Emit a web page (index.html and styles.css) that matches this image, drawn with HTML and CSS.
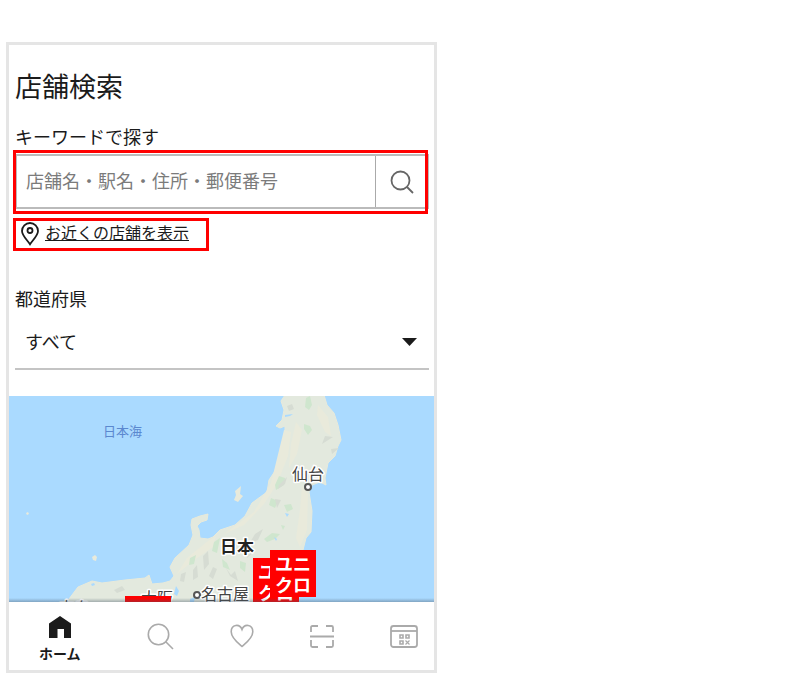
FILE: index.html
```html
<!DOCTYPE html>
<html lang="ja">
<head>
<meta charset="utf-8">
<meta name="viewport" content="width=device-width, initial-scale=1">
<title>店舗検索</title>
<link rel="stylesheet" href="styles.css">
</head>
<body>
<div class="app">
  <main class="content">
    <h1 class="title">店舗検索</h1>
    <label class="label" for="keyword">キーワードで探す</label>
    <form class="search">
      <input class="search-input" id="keyword" type="text" placeholder="店舗名・駅名・住所・郵便番号">
      <button class="search-button" type="button" aria-label="検索">
        <svg width="24" height="24" viewBox="0 0 24 24" fill="none" stroke="#666" stroke-width="1.800"><circle cx="10.500" cy="10.500" r="9"/><path d="M17 17l6 6"/></svg>
      </button>
    </form>
    <a class="nearby" href="#map">
      <svg width="18" height="24" viewBox="0 0 18 24" fill="none" stroke="#1b1b1b" stroke-width="1.800"><path d="M9 22.300C6.500 18.500 1 13.500 1 9a8 8 0 0 1 16 0c0 4.500-5.500 9.500-8 13.300z"/><circle cx="9" cy="8.500" r="2.500"/></svg>
      <span class="nearby-text">お近くの店舗を表示</span>
    </a>
    <label class="label label-area" for="area">都道府県</label>
    <div class="select-wrap">
      <select class="select" id="area"><option>すべて</option></select>
      <svg class="select-arrow" width="15" height="8" viewBox="0 0 15 8"><path d="M0 0h15L7.500 8z" fill="#1b1b1b"/></svg>
    </div>
  </main>

  <svg class="map" id="map" viewBox="9 396 425 206" preserveAspectRatio="xMidYMid slice" role="img" aria-label="日本の地図">
    <defs>
      <linearGradient id="shade" x1="0" y1="0" x2="0" y2="1"><stop offset="0" stop-color="#456" stop-opacity="0"/><stop offset="1" stop-color="#456" stop-opacity=".4"/></linearGradient>
      <g id="pin">
        <path d="M0 0h46v47H0z" fill="#f00"/>
        <text class="pin-text" x="5" y="21">ユニ</text>
        <text class="pin-text" x="5" y="42">クロ</text>
      </g>
    </defs>
    <path d="M9 396h425v206H9z" fill="#aadaff"/>
    <path fill="#e3e9de" stroke="#e8eadb" d="M285 395L281 401 284 410 282 420 276 426 280 428 285 426 285 440 281 455 279 465 269 480 267 492 252 503 245 516 235 525 220 530 213 537 208 539 200 538 199 530 197 526 201 522 207 520 208 514 200 516 192 519 191 525 193 535 189 545 175 558 170 567 174 576 170 581 163 583 152 584 149 575 145 578 125 580 102 583 92 581 78 587 66 603H290L294 585 298 560 303 550 306 538 311 532 312 511 309 492 312 485 320 482 326 485 325 478 328 463 335 456 338 446 341 440 338 425 334 413 327 405 324 395Z"/>
    <g fill="#e9eadb">
      <path d="M284 430l7 2-3 24-11 28-13 20-20 21-20 9 30-22 17-29zM302 486l6 8-1 36-7 17-4-9 4-28zM318 405l10 12 3 19-6-4-8-17zM296 422l6 8-5 24-8 14 2-24zM208 541l8-5-3 11-20 14-16 13 10-16z"/>
      <path d="M241 486l-6 5 1 4-2 5 4 2 5-6-3-2zM92 557l3-2 2 2-1 4-3-1zM26 513l2-1 1 2-2 1z"/>
    </g>
    <g fill="#cfe6ce">
      <path d="M306 398l4-2 2 9-3 5-4-3zM304 424l6 2 2 4-4 5-4-6zM279 476l6 2-1 7-8 5-1-5zM271 498l7 3-3 7-6-3zM284 505l7-1 2 5-6 3zM264 539l8-6 8 1-5 5-8 3zM214 542l6-4-3 15-5-2zM190 558l6-3-2 9-5 1zM240 561l6 2-1 9-5-4zM222 559l5 4 3 7-7-3zM281 525l4 1-2 4z"/>
    </g>
    <g fill="#d6dcd3">
      <path d="M325 436l8 1-11 7zM331 449l8-1-7 6zM275 499l6 1-4 8zM255 534l8-5-5 11-9 4zM203 556l5-5 1 13-5 6zM181 574l5-2-2 10-4-1zM213 567l4 2-4 10-4-3zM193 570l4-5 1 12-5 3zM287 406l5-2 2 5-5 2zM279 485l8-8-2 7-7 5zM226 568l5 7 4-4 3 10-8-5zM245 550l6-5 4 6-8 7zM114 590l8-4 3 4-8 3z"/>
    </g>
    <path fill="#aadaff" d="M285 415l8-1-3 2-5 1zM285 513l4 1-2 3zM176 586l3 5-2 5-3-2zM190 599l5-2-1 5h-4zM91 584l3-1 1 2-3 1zM274 537l3 2-1 2z"/>
    <text class="sea" x="103" y="436">日本海</text>
    <text class="city" x="292" y="480">仙台</text>
    <circle class="spot" cx="308" cy="487" r="3"/>
    <text class="country" x="220" y="553">日本</text>
    <text class="city" x="141" y="604">大阪</text>
    <text class="city" x="58" y="614">広島</text>
    <circle class="spot" cx="197" cy="595" r="3"/>
    <text class="city" x="201" y="600">名古屋</text>
    <use href="#pin" x="125" y="596"/>
    <use href="#pin" x="253" y="558"/>
    <use href="#pin" x="270" y="550"/>
    <path d="M9 598h425v4H9z" fill="url(#shade)"/>
  </svg>

  <nav class="tabs">
    <a class="tab tab-home" href="#home">
      <svg width="24" height="24" viewBox="0 0 24 24"><path fill="#1b1b1b" d="M12 1L23 8.500V23h-7v-9H9.500v9H1V8.500z"/></svg>
      <span>ホーム</span>
    </a>
    <a class="tab" href="#search" aria-label="検索"><svg width="27" height="27" viewBox="0 0 27 27" fill="none" stroke="#aaa" stroke-width="1.600"><circle cx="11.500" cy="11.500" r="10.200"/><path d="M18.500 18.500l7.500 7.500"/></svg></a>
    <a class="tab" href="#favorites" aria-label="お気に入り"><svg width="24" height="24" viewBox="0 0 24 24" fill="none" stroke="#aaa" stroke-width="1.600"><path d="M12 22.500C8.500 19.500 1.200 14 1.200 7.700c0-7.600 8.600-8.200 10.800-2.200 2.200-6 10.800-5.400 10.800 2.200C22.800 14 15.500 19.500 12 22.500z"/></svg></a>
    <a class="tab" href="#scan" aria-label="スキャン"><svg width="24" height="24" viewBox="0 0 24 24" fill="none" stroke="#aaa" stroke-width="1.800"><path d="M8 2H2.500Q1 2 1 3.500V8M16 2h5.500Q23 2 23 3.500V8M1 16v5.500Q1 23 2.500 23H8M23 16v5.500Q23 23 21.500 23H16M0 12.500h24"/></svg></a>
    <a class="tab" href="#membership" aria-label="会員証"><svg width="28" height="24" viewBox="0 0 28 24" fill="none" stroke="#aaa" stroke-width="1.800"><rect x="1" y="2" width="26" height="21" rx="2.500"/><path d="M1 7h26"/><path d="M10 11h3v3h-3zM16 11h3v3h-3zM10 17h3v3h-3z" stroke-width="1.600"/><path d="M15.500 16.500l4 4M19.500 16.500l-4 4" stroke-width="1.200"/></svg></a>
  </nav>
</div>
</body>
</html>
```

FILE: styles.css
```css
* {
  box-sizing: border-box;
}

body {
  margin: 0;
  padding: 42px 6px 0;
  background: #fff;
  color: #1b1b1b;
  font-family: "Noto Sans CJK JP", sans-serif;
  font-size: 18px;
}

.app {
  max-width: 431px;
  border: 3px solid #e5e5e5;
}

.content {
  display: flex;
  flex-direction: column;
  padding: 21px 5px 26px 6px;
}

.title {
  margin: 0 0 17px;
  font-size: 27px;
  font-weight: 400;
  line-height: 40px;
}

.label {
  margin-bottom: 5px;
  line-height: 26px;
}

.label-area {
  margin-top: 34px;
}

.search {
  position: relative;
  display: flex;
  height: 55px;
  border: 2px solid #bbb;
}

.search::after {
  content: "";
  position: absolute;
  inset: -6px -1px -7px -4px;
  border: 3px solid #f00;
  pointer-events: none;
}

.search-input {
  flex: 1;
  min-width: 0;
  padding: 0 9px 3px;
  border: 0;
  background: none;
  font: inherit;
}

.search-input::placeholder {
  color: #7b7b7b;
  opacity: 1;
}

.search-button {
  display: flex;
  align-items: center;
  justify-content: center;
  width: 52px;
  padding: 0;
  border: 0;
  border-left: 1px solid #aaa;
  background: none;
}

.nearby {
  display: flex;
  align-items: flex-start;
  align-self: flex-start;
  gap: 6px;
  height: 33px;
  margin: 9px 0 0 -2px;
  padding: 1px 17px 0 5px;
  border: 3px solid #f00;
  color: inherit;
  font-size: 16px;
  line-height: 20px;
  text-decoration: none;
}

.nearby-text {
  text-decoration: underline;
}

.select-wrap {
  position: relative;
  display: grid;
}

.select {
  height: 54px;
  padding: 0 32px 2px 10px;
  border: 0;
  border-bottom: 2px solid #c4c4c4;
  border-radius: 0;
  background: none;
  color: inherit;
  font: inherit;
  appearance: none;
}

.select-arrow {
  position: absolute;
  top: 22px;
  right: 12px;
  pointer-events: none;
}

.map {
  display: block;
  width: 100%;
}

.sea {
  fill: #5b88cf;
  font-size: 13px;
}

.city,
.country {
  fill: #444;
  stroke: #fff;
  stroke-width: 3px;
  stroke-linejoin: round;
  paint-order: stroke;
  font-size: 16px;
}

.country {
  fill: #222;
  font-size: 17px;
  font-weight: 700;
}

.spot {
  fill: #fff;
  stroke: #555;
  stroke-width: 2px;
}

.pin-text {
  fill: #fff;
  font-size: 18px;
  font-weight: 700;
}

.tabs {
  display: flex;
  align-items: center;
  justify-content: space-between;
  height: 68px;
  padding: 0 16px 0 30px;
}

.tab {
  display: flex;
  flex-direction: column;
  align-items: center;
  color: inherit;
  font-size: 14px;
  font-weight: 700;
  line-height: 20px;
  text-decoration: none;
}

.tab-home {
  gap: 4px;
  margin-right: 10px;
  padding-top: 6px;
}
```
